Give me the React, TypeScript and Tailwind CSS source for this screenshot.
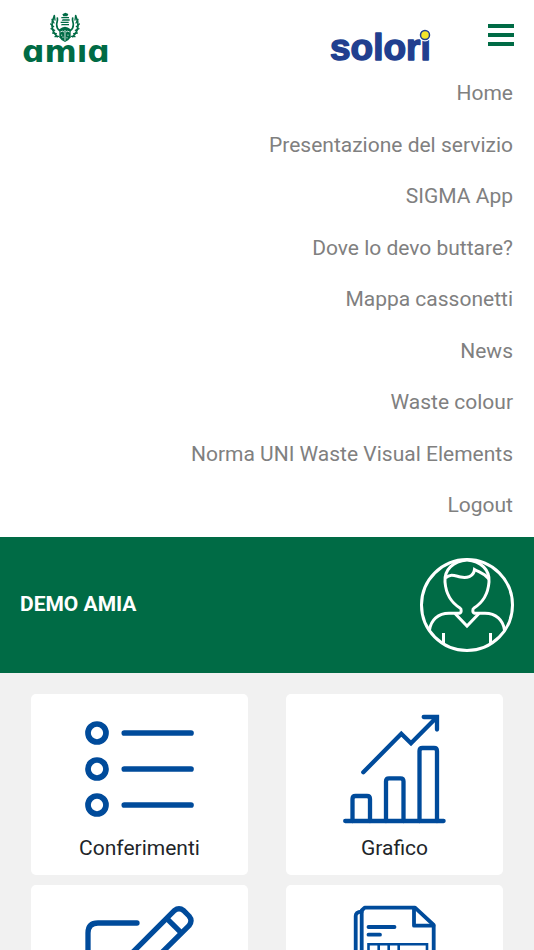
import React from "react";

interface MenuItem {
  label: string;
  href: string;
}

interface Tile {
  name: string;
  title?: string;
  icon: React.ReactNode;
}

const menuItems: MenuItem[] = [
  { label: "Home", href: "#home" },
  { label: "Presentazione del servizio", href: "#presentazione" },
  { label: "SIGMA App", href: "#sigma" },
  { label: "Dove lo devo buttare?", href: "#dove" },
  { label: "Mappa cassonetti", href: "#mappa" },
  { label: "News", href: "#news" },
  { label: "Waste colour", href: "#colour" },
  { label: "Norma UNI Waste Visual Elements", href: "#norma" },
  { label: "Logout", href: "#logout" },
];

const AmiaLogo = () => (
  <svg width="92" height="60" viewBox="0 0 92 60" role="img" aria-label="amia" fill="#006b45">
    <g transform="translate(30 0) scale(.3333)">
      {/* wings */}
      <g fill="none" stroke="#006b45" strokeLinecap="round">
        <path d="M13 12C2 32 3 56 22 74" strokeWidth="5" />
        <path d="M77 12C88 32 87 56 68 74" strokeWidth="5" />
        <path d="M13 10l2 14M6 22l6 11M2 36l9 8M3 50l11 5M8 63l11 2M15 74l11-1" strokeWidth="4" />
        <path d="M77 10l-2 14M84 22l-6 11M88 36l-9 8M87 50l-11 5M82 63l-11 2M75 74l-11-1" strokeWidth="4" />
        <path d="M22 18c2 8-2 13-2 20s4 14 9 18M68 18c-2 8 2 13 2 20s-4 14-9 18" strokeWidth="5" />
      </g>
      {/* crown and shield */}
      <path d="M37 7l9-5 9 4-3 7H40zM34 15h23v4H34zM38 22h21v4H35zM32 29h24v4H32zM35 36h22v4H33z" />
      <path d="M28 52q17-16 34 0v24q-5 10-17 14-12-4-17-14z" />
      <path d="M45 54v32M31 60q7-5 11 0M48 60q4-5 11 0" stroke="#fff" strokeWidth="2.500" fill="none" />
      <path d="M35 68v3M39 74v3M54 68v3M51 76v3" stroke="#fff" strokeWidth="3" />
    </g>
    <text x="46" y="50" textAnchor="middle" className="font-['DejaVu_Sans',sans-serif] text-[31px] font-bold">
      ɑmıɑ
    </text>
  </svg>
);

const SoloriLogo = () => (
  <svg width="104" height="44" viewBox="0 0 104 44" role="img" aria-label="solori">
    <text
      x="2"
      y="33"
      fill="#213f8f"
      stroke="#213f8f"
      strokeWidth="1.500"
      strokeLinejoin="round"
      className="font-['Liberation_Sans',sans-serif] text-[37px] font-bold"
    >
      solori
    </text>
    <circle cx="97" cy="8" r="6.500" fill="#fff" />
    <circle cx="97" cy="8" r="4.500" fill="#f3e52c" stroke="#213f8f" strokeWidth="1.500" />
  </svg>
);

const Avatar = () => (
  <svg
    width="94"
    height="94"
    viewBox="0 0 94 94"
    fill="none"
    stroke="#fff"
    strokeWidth="3"
    aria-hidden="true"
  >
    <circle cx="47" cy="47" r="45.5" />
    <path d="M47 2C33 3 24 12 25 24c1 13 7 21 15 26 1.800 1 1.500 5-.5 5.300H29C18 55.300 11 62 9.500 72" />
    <path d="M47 2c14 1 23 10 22 22-1 13-7 21-15 26-1.800 1-1.500 5 .5 5.300H65C76 55.300 83 62 84.500 72" />
    <path d="M25.500 20c5-5 10-2 15-1 6 1.200 13 0 14-7.500 5 3 9 3 14.500 9.500" />
    <path d="M35 55.500L47 68l12-12.500M23.500 75v11M70.500 75v11" />
  </svg>
);

const ListIcon = () => (
  <svg width="110" height="110" viewBox="0 0 110 110" fill="none" stroke="#004b9b" strokeWidth="5.7" strokeLinecap="round" aria-hidden="true">
    <circle cx="12" cy="19" r="9" />
    <circle cx="12" cy="55" r="9" />
    <circle cx="12" cy="91" r="9" />
    <path d="M39.300 19H106M39.300 55H106M39.300 91H106" />
  </svg>
);

const ChartIcon = () => (
  <svg width="110" height="110" viewBox="0 0 110 110" fill="none" stroke="#004b9b" strokeWidth="4.300" strokeLinecap="round" strokeLinejoin="round" aria-hidden="true">
    <path d="M5.200 107H103.600" />
    <path d="M12.500 107V85q0-3 3-3h11.500q3 0 3 3v22" />
    <path d="M46 107V67.300q0-3 3-3h11.500q3 0 3 3V107" />
    <path d="M79.500 107V37q0-3 3-3H94q3 0 3 3v70" />
    <path d="M23.300 58.300L61.300 19.700l9.700 9.600L97 3M83.700 3H97v12.500" strokeLinejoin="miter" />
  </svg>
);

const EditIcon = () => (
  <svg width="110" height="110" viewBox="0 0 110 110" fill="none" stroke="#004b9b" strokeWidth="5.300" strokeLinecap="round" strokeLinejoin="round" aria-hidden="true">
    <path d="M52 18H13Q3 18 3 28v69q0 10 10 10h69q10 0 10-10V58" />
    <path d="M34 61L89.300 5.700q4.700-3.700 9.400 0l5.300 5.300q4 4.800 0 9.700L48 76l-19 5z" />
    <path d="M81.700 13.300L96 27.700" strokeLinecap="butt" />
  </svg>
);

const DocumentIcon = () => (
  <svg width="110" height="110" viewBox="0 0 110 110" fill="none" stroke="#004b9b" strokeWidth="3.800" strokeLinecap="round" strokeLinejoin="round" aria-hidden="true">
    <path d="M21.700 107V5.500l3-2.800H75L93.700 20v87z" />
    <path d="M74 3v17.700h19.500" />
    <path d="M21.700 6.700Q15.700 7 15.700 11v91h6" />
    <path d="M28.500 22h26M28.500 29.700H40" />
    <path d="M28.500 39.300H87V92H28.500zM38.700 39.300V92M48.700 39.300V92M58.700 39.300V92" strokeWidth="2.600" strokeLinejoin="miter" />
  </svg>
);

const tiles: Tile[] = [
  { name: "Conferimenti", title: "Conferimenti", icon: <ListIcon /> },
  { name: "Grafico", title: "Grafico", icon: <ChartIcon /> },
  { name: "Modifica", icon: <EditIcon /> },
  { name: "Documenti", icon: <DocumentIcon /> },
];

const Header = () => (
  <header className="bg-white pb-[5px]">
    <div className="flex h-[67px] items-start px-5">
      <a href="#home" className="mt-3">
        <AmiaLogo />
      </a>
      <a href="#solori" className="ml-auto mt-[27px]">
        <SoloriLogo />
      </a>
      <button
        type="button"
        aria-label="Menu"
        aria-expanded="true"
        className="ml-14 mt-6 flex w-[26px] flex-col gap-[5px] cursor-pointer"
      >
        <span className="h-1 w-full bg-[#006b45]" />
        <span className="h-1 w-full bg-[#006b45]" />
        <span className="h-1 w-full bg-[#006b45]" />
      </button>
    </div>

    <nav className="pt-px">
      <ul className="text-right">
        {menuItems.map((item) => (
          <li key={item.label}>
            <a
              href={item.href}
              className="block px-[21px] py-[10px] text-[21px] leading-normal text-[#808080]"
            >
              {item.label}
            </a>
          </li>
        ))}
      </ul>
    </nav>
  </header>
);

const TileCard: React.FC<{ tile: Tile }> = ({ tile }) => (
  <a
    href={`#${tile.name.toLowerCase()}`}
    aria-label={tile.name}
    className="flex flex-col items-center rounded-[5px] bg-white px-4 pt-5 pb-[11px]"
  >
    {tile.icon}
    <span className="mt-[9px] min-h-[31px] text-[21px] leading-[31px] text-[#212529]">
      {tile.title}
    </span>
  </a>
);

const App = () => {
  return (
    <div className="h-screen overflow-hidden bg-[#f1f1f1] font-[Roboto,sans-serif]">
      <Header />

      <section className="flex items-center justify-between bg-[#006b45] px-5 py-[21px]">
        <h1 className="text-[21px] leading-normal font-bold text-white">DEMO AMIA</h1>
        <Avatar />
      </section>

      <main className="grid grid-cols-2 gap-x-[38px] gap-y-[10px] px-[31px] py-[21px]">
        {tiles.map((tile) => (
          <TileCard key={tile.name} tile={tile} />
        ))}
      </main>
    </div>
  );
};

export default App;
